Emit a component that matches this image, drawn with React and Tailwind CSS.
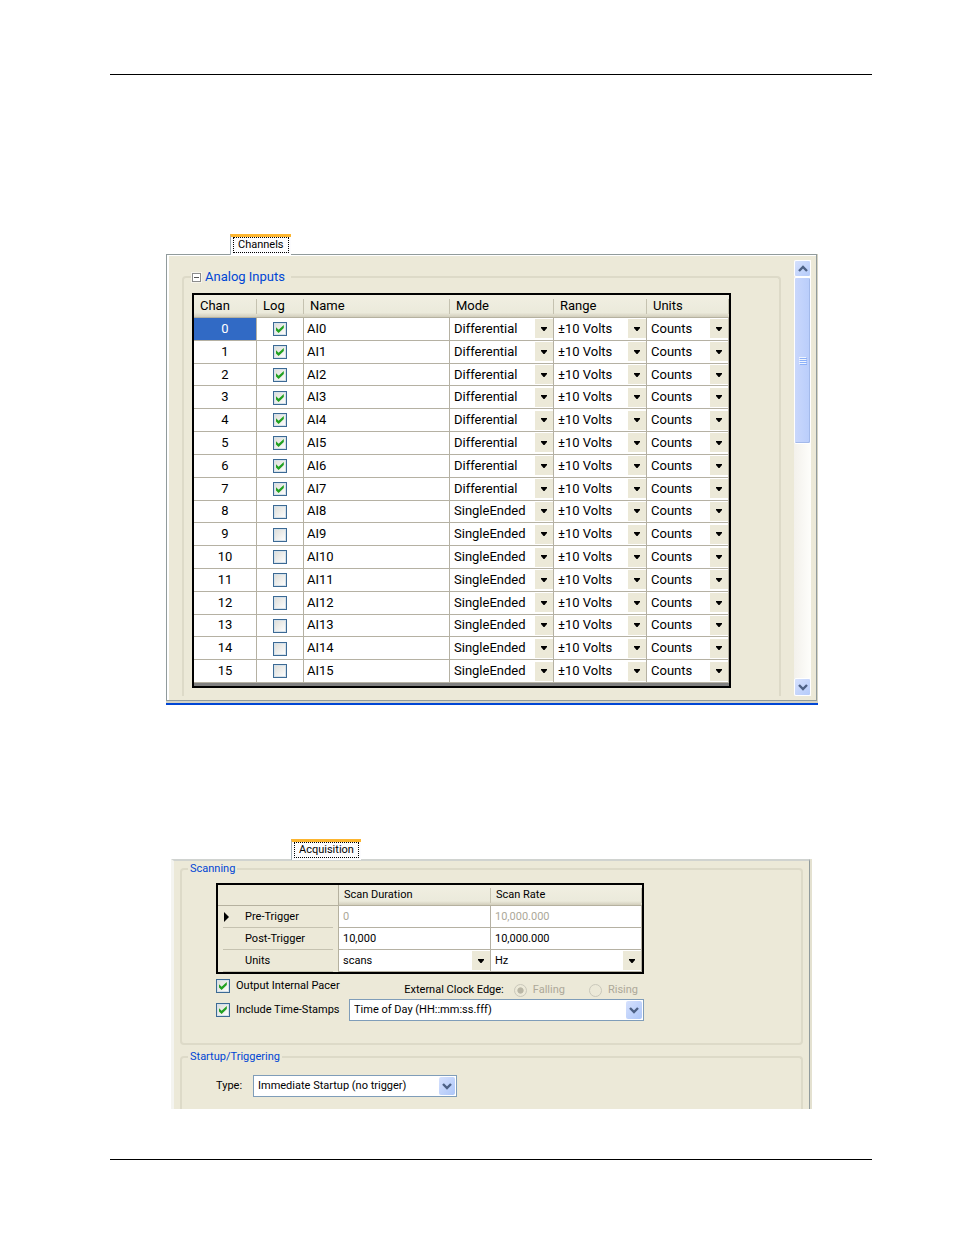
import { useState } from "react";

const channels = Array.from({ length: 16 }, (_, n) => ({
  id: n,
  name: `AI${n}`,
  log: n < 8,
  mode: n < 8 ? "Differential" : "SingleEnded",
}));

function CheckBox({ id, label, checked, onChange }) {
  return (
    <span className="inline-grid size-[14px] shrink-0 align-middle">
      <input
        id={id}
        type="checkbox"
        aria-label={label}
        checked={checked}
        onChange={onChange}
        className="col-start-1 row-start-1 size-[14px] appearance-none border border-[#3c6a94] bg-linear-to-br from-[#dcdcd7] to-white shadow-[inset_0_0_0_1px_#d5e1ea]"
      />
      {checked && (
        <svg viewBox="0 0 14 14" className="pointer-events-none col-start-1 row-start-1 size-[14px]">
          <path d="M3 5.2v3.2l2.6 2.5 5.2-5V2.9L5.6 7.8z" fill="#21a121" />
        </svg>
      )}
    </span>
  );
}

function GridSelect({ label, options, className = "" }) {
  return (
    <div className={`grid h-full items-center ${className}`}>
      <select
        aria-label={label}
        className="col-start-1 row-start-1 h-[19px] w-full appearance-none bg-transparent pl-1 pr-5 outline-none"
      >
        {options.map((o) => (
          <option key={o}>{o}</option>
        ))}
      </select>
      <span className="pointer-events-none col-start-1 row-start-1 flex h-[19px] w-[18px] items-center justify-center justify-self-end bg-[#ece9d8]">
        <svg viewBox="0 0 6 4" className="h-1 w-1.5">
          <path d="M0 0h6v1L3.5 4h-1L0 1z" fill="#000" />
        </svg>
      </span>
    </div>
  );
}

function Chevron({ up = false }) {
  return (
    <svg viewBox="0 0 10 8" className="h-2 w-2.5">
      <path
        d={up ? "M1 6l4-4 4 4" : "M1 2l4 4 4-4"}
        fill="none"
        stroke="#4d6185"
        strokeWidth="2.4"
      />
    </svg>
  );
}

function Combo({ id, label, options, className = "" }) {
  return (
    <div className={`grid h-[22px] items-center border border-[#7f9db9] bg-white ${className}`}>
      <select
        id={id}
        aria-label={label}
        className="col-start-1 row-start-1 h-5 w-full appearance-none bg-transparent pl-1 pr-5 outline-none"
      >
        {options.map((o) => (
          <option key={o}>{o}</option>
        ))}
      </select>
      <span className="pointer-events-none col-start-1 row-start-1 mr-px flex h-[18px] w-4 items-center justify-center justify-self-end rounded-xs bg-linear-to-br from-[#d6e1fd] to-[#adc6f8]">
        <Chevron />
      </span>
    </div>
  );
}

function Tab({ children, className = "" }) {
  return (
    <button
      type="button"
      role="tab"
      aria-selected="true"
      className={`relative -mb-px block border-l border-t-3 border-l-[#a5b1b8] border-t-[#fcb52f] bg-[#fcfcfe] px-0.5 pb-0.5 text-[11px] ${className}`}
    >
      <span className="block border border-dotted border-black px-1 leading-[14px]">{children}</span>
    </button>
  );
}

function HeadCell({ children, className = "" }) {
  return (
    <th scope="col" className="border-b border-[#b5b19f] bg-linear-to-b from-[#f1efe2] from-0% via-[#ebeadb] via-80% to-[#d2cebc] p-0 text-left font-normal">
      <div className={`flex h-[15px] items-center border-r border-[#c5c2b0] ${className}`}>{children}</div>
    </th>
  );
}

function Channels() {
  const [log, setLog] = useState(channels.map((c) => c.log));
  const toggle = (n) => setLog(log.map((v, i) => (i === n ? !v : v)));
  const cell = "border-b border-r border-[#b5b1a3] p-0";

  return (
    <section className="ml-14 mr-[54px] mt-[159px]">
      <Tab className="ml-16">Channels</Tab>
      <div className="bg-[#d5d3c4] pr-px">
        <div className="border border-[#919b9c] bg-[#ece9d8]">
          <div className="flex border-l-2 border-t border-white pr-[5px]">
            <fieldset className="mr-[13px] ml-[13px] mt-[13px] mb-1 min-w-0 flex-1 rounded-t border-2 border-b-0 border-[#dddac8] pl-2 pb-2 text-[13px]">
              <legend className="flex h-4 items-center gap-1 pr-1.5 text-[#0046d5]">
                <button
                  type="button"
                  aria-label="Collapse Analog Inputs"
                  className="flex size-[9px] items-center justify-center border border-[#8c8c8c] bg-white outline outline-[#f6f4ec]"
                >
                  <span className="h-px w-[5px] bg-[#555]" />
                </button>
                Analog Inputs
              </legend>
              <div className="mt-2 w-[539px] border-2 border-black bg-[#808080] pb-[3px] text-black">
                <table className="h-[388px] w-full table-fixed border-separate border-spacing-0 bg-white leading-4">
                  <colgroup>
                    <col className="w-[63px]" />
                    <col className="w-[47px]" />
                    <col className="w-[146px]" />
                    <col className="w-[104px]" />
                    <col className="w-[93px]" />
                    <col />
                  </colgroup>
                  <thead>
                    <tr className="h-[23px]">
                      <HeadCell className="pl-1.5">Chan</HeadCell>
                      <HeadCell className="pl-1.5">Log</HeadCell>
                      <HeadCell className="pl-1.5">Name</HeadCell>
                      <HeadCell className="pl-1.5">Mode</HeadCell>
                      <HeadCell className="pl-1.5">Range</HeadCell>
                      <HeadCell className="pl-1.5">Units</HeadCell>
                    </tr>
                  </thead>
                  <tbody>
                    {channels.map((c) => (
                      <tr key={c.id} className="h-[22px]">
                        <td className={`${cell} text-center ${c.id === 0 ? "bg-[#316ac5] text-white" : ""}`}>{c.id}</td>
                        <td className={`${cell} text-center leading-none`}>
                          <CheckBox label={`Log ${c.name}`} checked={log[c.id]} onChange={() => toggle(c.id)} />
                        </td>
                        <td className={cell}><span className="pl-[3px]">{c.name}</span></td>
                        <td className={cell}>
                          <GridSelect label={`Mode ${c.name}`} options={[c.mode]} />
                        </td>
                        <td className={cell}>
                          <GridSelect label={`Range ${c.name}`} options={["±10 Volts"]} />
                        </td>
                        <td className={cell}>
                          <GridSelect label={`Units ${c.name}`} options={["Counts"]} />
                        </td>
                      </tr>
                    ))}
                  </tbody>
                </table>
              </div>
            </fieldset>
            <div className="mt-1 mb-1 flex w-[17px] flex-col bg-linear-to-r from-[#f3f1ec] to-[#fefefb]">
              <button type="button" aria-label="Scroll up" className="flex h-[17px] items-center justify-center rounded-xs border border-white bg-linear-to-br from-[#d6e1fd] to-[#b5cbfa]">
                <Chevron up />
              </button>
              <div className="flex h-[167px] items-center justify-center rounded-xs border border-white bg-linear-to-r from-[#c9d7fc] to-[#b9cdfb] shadow-[inset_-1px_-1px_0_#a3b9ea]">
                <svg viewBox="0 0 8 8" className="size-2">
                  <path d="M0 .5h7M0 2.5h7M0 4.5h7M0 6.5h7" stroke="#eef4fe" />
                  <path d="M1 1.5h7M1 3.5h7M1 5.5h7M1 7.5h7" stroke="#8cb0f8" />
                </svg>
              </div>
              <button type="button" aria-label="Scroll down" className="mt-auto flex h-[18px] items-center justify-center rounded-xs border border-white bg-linear-to-br from-[#d6e1fd] to-[#b5cbfa]">
                <Chevron />
              </button>
            </div>
          </div>
        </div>
      </div>
      <div className="h-1 border-b-2 border-[#0046d5] bg-[#d5d3c4]" />
    </section>
  );
}

function Radio({ id, label, checked = false }) {
  return (
    <span className="flex items-center gap-1.5 text-[#aca899]">
      <input
        id={id}
        type="radio"
        name="clock-edge"
        disabled
        defaultChecked={checked}
        className="size-[13px] appearance-none rounded-full border border-[#cac8bb] checked:bg-radial checked:from-[#b9b6a6] checked:from-35% checked:to-transparent checked:to-45%"
      />
      <label htmlFor={id}>{label}</label>
    </span>
  );
}

function RowHead({ marker = false, children }) {
  return (
    <th scope="row" className="border-r border-[#b5b19f] bg-[#ece9d8] p-0 px-[5px] text-left font-normal">
      <div className="flex h-[21px] items-center border-b border-[#c5c2b0]">
        <span className="w-[22px]">
          {marker && (
            <svg viewBox="0 0 5 10" className="ml-px h-2.5 w-[5px]">
              <path d="M0 0l5 5-5 5z" fill="#000" />
            </svg>
          )}
        </span>
        {children}
      </div>
    </th>
  );
}

function Acquisition() {
  const [pacer, setPacer] = useState(true);
  const [stamps, setStamps] = useState(true);
  const cell = "border-b border-r border-[#b5b1a3] p-0";
  const box = "block h-5 w-full bg-transparent pl-1 outline-none";

  return (
    <section className="ml-[61px] mr-[60px] mt-[134px] text-[11px] leading-4">
      <Tab className="ml-[120px]">Acquisition</Tab>
      <div className="bg-[#e4e1d0] pr-0.5">
        <div className="border-l-3 border-r border-t-2 border-l-[#f4f4f0] border-r-[#919b9c] border-t-[#d0d3d0] bg-[#ece9d8] pl-1.5 pr-1.5">
          <fieldset className="min-w-0 rounded border-2 border-[#dddac8] pb-[21px] pl-[34px]">
            <legend className="-ml-7 h-4 px-0.5 text-[#0046d5]">Scanning</legend>
            <div className="mt-1.5 w-[428px] border-2 border-black">
              <table className="w-full table-fixed border-separate border-spacing-0 bg-white">
                <colgroup>
                  <col className="w-[121px]" />
                  <col className="w-[152px]" />
                  <col />
                </colgroup>
                <thead>
                  <tr className="h-[21px]">
                    <td className="border-b border-r border-[#b5b19f] bg-[#ece9d8] p-0" />
                    <HeadCell className="pl-[5px]">Scan Duration</HeadCell>
                    <HeadCell className="pl-[5px]">Scan Rate</HeadCell>
                  </tr>
                </thead>
                <tbody>
                  <tr className="h-[22px]">
                    <RowHead marker>Pre-Trigger</RowHead>
                    <td className={cell}><input aria-label="Pre-trigger duration" disabled defaultValue="0" className={`${box} text-[#aca899]`} /></td>
                    <td className={cell}><input aria-label="Pre-trigger rate" disabled defaultValue="10,000.000" className={`${box} text-[#aca899]`} /></td>
                  </tr>
                  <tr className="h-[22px]">
                    <RowHead>Post-Trigger</RowHead>
                    <td className={cell}><input aria-label="Post-trigger duration" defaultValue="10,000" className={box} /></td>
                    <td className={cell}><input aria-label="Post-trigger rate" defaultValue="10,000.000" className={box} /></td>
                  </tr>
                  <tr className="h-[22px]">
                    <RowHead>Units</RowHead>
                    <td className={cell}><GridSelect label="Duration units" options={["scans"]} /></td>
                    <td className={cell}><GridSelect label="Rate units" options={["Hz"]} /></td>
                  </tr>
                </tbody>
              </table>
            </div>
            <div className="grid w-[428px] grid-cols-[133px_1fr] items-center">
              <div className="flex h-6 items-center gap-1.5 whitespace-nowrap">
                <CheckBox id="pacer" checked={pacer} onChange={() => setPacer(!pacer)} />
                <label htmlFor="pacer">Output Internal Pacer</label>
              </div>
              <div className="flex items-center justify-end pt-2 pr-1.5">
                <span>External Clock Edge:</span>
                <div className="ml-2.5 flex gap-6">
                  <Radio id="falling" label="Falling" checked />
                  <Radio id="rising" label="Rising" />
                </div>
              </div>
              <div className="flex h-6 items-center gap-1.5 whitespace-nowrap">
                <CheckBox id="stamps" checked={stamps} onChange={() => setStamps(!stamps)} />
                <label htmlFor="stamps">Include Time-Stamps</label>
              </div>
              <Combo label="Time-stamp format" options={["Time of Day (HH::mm:ss.fff)"]} />
            </div>
          </fieldset>
          <fieldset className="mt-1 min-w-0 rounded-t border-2 border-b-0 border-[#dddac8] pb-3 pl-[34px]">
            <legend className="-ml-7 h-4 px-0.5 text-[#0046d5]">Startup/Triggering</legend>
            <div className="mt-2.5 flex items-center">
              <label htmlFor="type" className="w-[37px]">Type:</label>
              <Combo id="type" options={["Immediate Startup (no trigger)"]} className="w-[204px]" />
            </div>
          </fieldset>
        </div>
      </div>
    </section>
  );
}

export default function App() {
  return (
    <main className="bg-white pb-[75px] pl-[110px] pr-[82px] pt-[74px] font-['Roboto','Liberation_Sans',sans-serif] text-black">
      <div className="border-t border-black" />
      <Channels />
      <Acquisition />
      <div className="mt-[50px] border-t border-black" />
    </main>
  );
}
